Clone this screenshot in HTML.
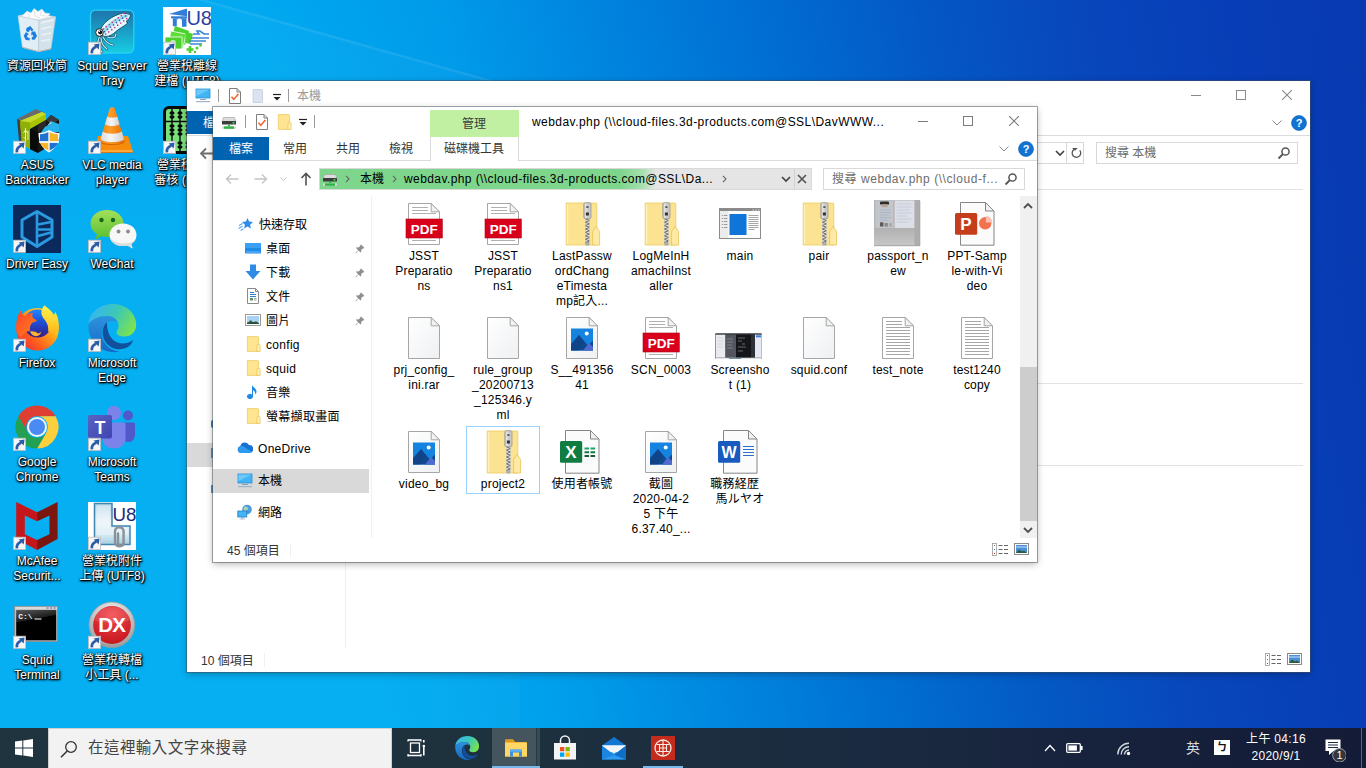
<!DOCTYPE html><html lang="zh-Hant"><head><meta charset="utf-8"><title>Desktop</title><style>
*{box-sizing:border-box;margin:0;padding:0}
html,body{width:1366px;height:768px;overflow:hidden}
body{position:relative;font-family:"Liberation Sans","Noto Sans CJK TC",sans-serif;font-size:12px;color:#000;
background:linear-gradient(180deg,rgba(0,70,210,.05) 0,rgba(0,70,210,0) 300px),linear-gradient(80deg,#00aef2 0px,#00aef2 386px,#009feb 564px,#0087df 721px,#0070d3 879px,#0459c5 1036px,#0846bb 1194px,#073db5 1357px,#0839b0 1479px);}
.abs{position:absolute}
.ray{position:absolute;left:0;top:0;width:1366px;height:768px}
/* desktop icons */
.di{position:absolute;width:90px;text-align:center;color:#fff;font-size:12px;line-height:15px;
 text-shadow:1px 1px 1px #000,0 0 2px #000,1px 1px 3px rgba(0,0,0,.9),0 1px 2px rgba(0,0,0,.9)}
.di svg{display:block;margin:0 auto 4px auto;width:48px;height:48px;overflow:visible;text-shadow:none}
.ls{letter-spacing:.3px}
.di .ls{letter-spacing:0}
.ttl{letter-spacing:.45px}
.adr{letter-spacing:.41px}
.srch{letter-spacing:.55px}
.fi .lb{letter-spacing:.2px}
/* windows */
.win{position:absolute;background:#fff;box-shadow:0 0 0 1px rgba(70,80,90,.5),0 2px 7px rgba(0,0,0,.3)}
.t12{font-size:12px;line-height:16px;white-space:nowrap}
.gray{color:#6d6d6d}
.nav{position:absolute;font-size:12px;line-height:16px;white-space:nowrap;color:#000}
.fi{position:absolute;width:76px;text-align:center;font-size:12px;line-height:15px;color:#000;word-break:break-all}
.fi svg{display:block;margin:0 auto;width:48px;height:48px;overflow:visible}
.fi .lb{margin-top:1px}
/* taskbar */
#tb{position:absolute;left:0;top:728px;width:1366px;height:40px;
 background:linear-gradient(90deg,#1f343e 0px,#1e323d 400px,#1c2e3f 700px,#1a2940 900px,#17223c 1100px,#141b37 1366px)}
</style></head><body>
<svg width="0" height="0" style="position:absolute"><linearGradient id="bk" x1="0" y1="0" x2="1" y2="1"><stop offset="0" stop-color="#ffffff"/><stop offset="1" stop-color="#eef0f2"/></linearGradient><linearGradient id="pp" x1="0" y1="0" x2="0" y2="1"><stop offset="0" stop-color="#b1b1b1"/><stop offset="1" stop-color="#c7c7c7"/></linearGradient></svg>
<svg class="ray" viewBox="0 0 1366 768"><polygon points="0,-58 520,88 520,768 0,768" fill="#fff" opacity=".025"/><polygon points="0,-58 520,88 520,90.500 0,-55" fill="#fff" opacity=".08"/></svg>
<div class="di" style="left:-8px;top:7px"><svg viewBox="0 0 48 48"><path d="M5 9l15-3.500 22.700 4.400L26 13.500z" fill="#eef0f3" stroke="#cfd4da" stroke-width=".6"/><path d="M9 9l5-5 4 2 3-4.500 4 3 4-2.500 3 4 5 .5-3 4-8 2-9-1z" fill="#fbfbfc" stroke="#d4d9df" stroke-width=".5"/><path d="M14 5l3 4-4 3M21 3l1 6 5 2M29 3l-2 5 6 1" fill="none" stroke="#cfd5dc" stroke-width=".6"/><path d="M5 9l21 4.500-.4 31.100L9.400 40.300z" fill="#f3f4f6" opacity=".93" stroke="#c9ced5" stroke-width=".6"/><path d="M26 13.500l16.700-3.600L38 41.800l-12.400 2.800z" fill="#e4e7eb" opacity=".93" stroke="#c4c9d0" stroke-width=".6"/><path d="M28 16l12-3M28 22l11-2.500M28 28l10-2M28 34l9-1.500" stroke="#f2f5f8" stroke-width="1.600" opacity=".8"/><path d="M9.400 40.300l16.200 4.300L38 41.800" fill="none" stroke="#c9b8b0" stroke-width="1"/><g fill="#1b7fe0"><path d="M13.500 21l3.800-2 3.300 4-2 1.300-1.300-1.800-1.700 2.700-2.600-1.200z"/><path d="M22 24.500l2 4.500-2.300 3.800-3-.4.200-2.600 1.700.2-1.200-2.500-1.300.9.500-3.800z"/><path d="M16.500 33.500l-4-.8-1.800-4 2.300-3.700 3 2.200-1.200.6-.8 1.400.9 1.500 1.900.4z"/></g></svg>資源回收筒</div>
<div class="di" style="left:67px;top:7px"><svg viewBox="0 0 48 48"><linearGradient id="sq" x1="0" y1="0" x2="0" y2="1"><stop offset="0" stop-color="#1d74ac"/><stop offset=".5" stop-color="#1a9fc6"/><stop offset="1" stop-color="#17cde4"/></linearGradient><rect x="2.500" y="3.200" width="43.300" height="42.800" rx="5" fill="url(#sq)" stroke="#27d2f2" stroke-width="1.300"/><path d="M11 37c0 3 1 6 3 8M13 31c0 4 2 8 6 11M15 30c2 4 5 7 10 8M16 28c3 2 7 4 11 2l1-3M11.500 30c-2 3-2 7-1 11" fill="none" stroke="#0d4f66" stroke-width="2.400" stroke-linecap="round"/><path d="M11 37c0 3 1 6 3 8M13 31c0 4 2 8 6 11M15 30c2 4 5 7 10 8M16 28c3 2 7 4 11 2l1-3M11.500 30c-2 3-2 7-1 11" fill="none" stroke="#bfeaf5" stroke-width="1.300" stroke-linecap="round"/><path d="M12 24C14 16 24 8.500 35 6l7.500 1.500c0 2.500-1.500 5-4.500 7l2 1.500c-5 4-8 5-12 8.500-3 3-7 5-10 5-3 0-6-2-6-5.500z" fill="#e3f8fc" stroke="#0d4f66" stroke-width=".9"/><path d="M15 26C19 19 28 12 39 8.500" fill="none" stroke="#86dcea" stroke-width="3.400" opacity=".85" stroke-linecap="round"/><circle cx="15.3" cy="21.9" r=".85" fill="#d23a8e"/><circle cx="16.5" cy="24.5" r=".85" fill="#3f55c8"/><circle cx="17.7" cy="27.1" r=".85" fill="#d23a8e"/><circle cx="18.3" cy="19.7" r=".85" fill="#d23a8e"/><circle cx="19.5" cy="22.3" r=".85" fill="#3f55c8"/><circle cx="20.7" cy="24.9" r=".85" fill="#d23a8e"/><circle cx="21.3" cy="17.5" r=".85" fill="#d23a8e"/><circle cx="22.5" cy="20.1" r=".85" fill="#3f55c8"/><circle cx="23.7" cy="22.7" r=".85" fill="#d23a8e"/><circle cx="24.3" cy="15.3" r=".85" fill="#d23a8e"/><circle cx="25.5" cy="17.9" r=".85" fill="#3f55c8"/><circle cx="26.7" cy="20.5" r=".85" fill="#d23a8e"/><circle cx="27.3" cy="13.0" r=".85" fill="#d23a8e"/><circle cx="28.5" cy="15.6" r=".85" fill="#3f55c8"/><circle cx="29.7" cy="18.2" r=".85" fill="#d23a8e"/><circle cx="30.3" cy="10.8" r=".85" fill="#d23a8e"/><circle cx="31.5" cy="13.4" r=".85" fill="#3f55c8"/><circle cx="32.7" cy="16.0" r=".85" fill="#d23a8e"/><circle cx="33.3" cy="8.6" r=".85" fill="#d23a8e"/><circle cx="34.5" cy="11.2" r=".85" fill="#3f55c8"/><circle cx="35.7" cy="13.8" r=".85" fill="#d23a8e"/><circle cx="36.3" cy="6.4" r=".85" fill="#d23a8e"/><circle cx="37.5" cy="9.0" r=".85" fill="#3f55c8"/><circle cx="38.7" cy="11.6" r=".85" fill="#d23a8e"/><circle cx="11.500" cy="25.500" r="3.800" fill="#fff" stroke="#111" stroke-width=".9"/><circle cx="12.200" cy="25.300" r="2.100" fill="#111"/><circle cx="11.300" cy="24.500" r=".7" fill="#fff"/><rect x=".4" y="35.200" width="12.200" height="12.200" fill="#f6f6f6" stroke="#bdbdbd" stroke-width=".8"/><path d="M3.900 46.400c-.4-3.400 1.200-5.600 4.400-6.600" stroke="#2b5ca8" stroke-width="2.700" fill="none"/><path d="M5.600 37.400l5.900-.8-.8 5.900z" fill="#2b5ca8"/></svg><span class="ls">Squid Server<br>Tray</span></div>
<div class="di" style="left:142px;top:7px"><svg viewBox="0 0 48 48"><rect x="0" y="0" width="48" height="48" fill="#fff"/><path d="M6 7l18-5.500v7.800z" fill="#2f7fd6"/><rect x="8" y="9.300" width="16" height="2" fill="#2f7fd6"/><path d="M9.800 11.300h4v8h-4zM19 11.300h4.500v8.500h-4.500z" fill="#2f7fd6"/><path d="M13.800 14a2.600 2.600 0 0 1 5.200 0v-2.700h-5.200z" fill="#2f7fd6"/><text x="36.200" y="17.700" font-family="Liberation Sans,sans-serif" font-size="20" fill="#2a3fa0" text-anchor="middle">U8</text><g fill="#4cd12e"><path d="M12 19l14 5-4 14-14-5z"/><path d="M8 24l15 3-3 14-15-3z" fill="#5fdc3a" stroke="#fff" stroke-width=".8"/><path d="M2 30h17v12h-17z" stroke="#fff" stroke-width=".8"/><path d="M22 24l8 3-3 10-4-1z"/></g><circle cx="10" cy="36" r="3" fill="#fff" opacity=".7"/><path d="M30 27h6l-2-3h3l4 3h5M28 31h18M26 34h17M27 37h12" stroke="#3a86d8" stroke-width="1.600" fill="none"/><path d="M27 39v7M23.500 42.500h7" stroke="#4cd12e" stroke-width="2.600"/><circle cx="34" cy="41" r="1.500" fill="#4cd12e"/><circle cx="37.500" cy="38.500" r="1.300" fill="#4cd12e"/><circle cx="32" cy="45" r="1.200" fill="#4cd12e"/><rect x=".4" y="35.200" width="12.200" height="12.200" fill="#f6f6f6" stroke="#bdbdbd" stroke-width=".8"/><path d="M3.900 46.400c-.4-3.400 1.200-5.600 4.400-6.600" stroke="#2b5ca8" stroke-width="2.700" fill="none"/><path d="M5.600 37.400l5.900-.8-.8 5.900z" fill="#2b5ca8"/></svg>營業稅離線<br>建檔 (UTF8)</div>
<div class="di" style="left:-8px;top:106px"><svg viewBox="0 0 48 48"><path d="M4 13l19-10 9 4-18 11z" fill="#6a6a6a"/><path d="M4 13l10 5v22l-8-5z" fill="#3e3e3e"/><path d="M7 15l22-9 4 2v7l-16 8v20l-8-5z" fill="#a6c400"/><path d="M7 15l22-9 4 2-16 8.500z" fill="#c6da2e"/><path d="M7 15l10 1.500V43l-8-5z" fill="#8fae08"/><path d="M12.500 22v14M10.500 27l2-3 2 3M15 25v9M10.500 31l2 2" stroke="#e4f2a8" stroke-width="1" fill="none"/><path d="M17 23l16-9 5-5 8 5v20L25 47l-8-4z" fill="#161616"/><path d="M33 14l5-5 8 5-7 4.500z" fill="#3a3a3a"/><path d="M17 23l8 3v21l-8-4z" fill="#0a0a0a"/><path d="M25 26l8-5v-7l-8 4.500z" fill="#2a2a2a"/><path d="M28 27c2-5 6-8 11-9l-1-3 8 3v8c-7 0-12 2-18 6z" fill="#26b2ea"/><path d="M28 27c2-5 6-8 11-9l-1-3-5 6c-2 1-4 3-5 6z" fill="#7fd6f5"/><path d="M36 24c3 2 6.500 3 10.500 3 0 9-3 15-10.500 19.500C28.500 42 25.500 36 25.500 27c4 0 7.500-1 10.500-3z" fill="#fff"/><path d="M36 25.700c2.700 1.600 5.500 2.400 9 2.600v7.200h-9z" fill="#f7b52a"/><path d="M36 25.700c-2.700 1.600-5.500 2.400-9 2.600v7.200h9z" fill="#1f72d0"/><path d="M27 36.500h9V45c-5-2.500-8-5-9-8.500z" fill="#f7b52a"/><path d="M45 36.500h-9V45c5-2.500 8-5 9-8.500z" fill="#1f72d0"/><path d="M36 25v20.500M26 36h20" stroke="#fff" stroke-width="1.300"/><rect x=".4" y="35.200" width="12.200" height="12.200" fill="#f6f6f6" stroke="#bdbdbd" stroke-width=".8"/><path d="M3.900 46.400c-.4-3.400 1.200-5.600 4.400-6.600" stroke="#2b5ca8" stroke-width="2.700" fill="none"/><path d="M5.600 37.400l5.900-.8-.8 5.900z" fill="#2b5ca8"/></svg><span class="ls">ASUS<br>Backtracker</span></div>
<div class="di" style="left:67px;top:106px"><svg viewBox="0 0 48 48"><linearGradient id="vl" x1="0" y1="0" x2="1" y2="0"><stop offset="0" stop-color="#ee7f08"/><stop offset=".4" stop-color="#ff9d2a"/><stop offset="1" stop-color="#e36c00"/></linearGradient><linearGradient id="vw" x1="0" y1="0" x2="1" y2="0"><stop offset="0" stop-color="#d9d9d9"/><stop offset=".45" stop-color="#f6f6f6"/><stop offset="1" stop-color="#cfcfcf"/></linearGradient><path d="M10 30h30l4.500 14v2.500h-37.500v-2.500z" fill="#f68b0c"/><path d="M7 44h37.500v2.500h-37.500z" fill="#ffa93a"/><path d="M7 46h37.500v.8h-37.500z" fill="#d96a00"/><path d="M21.500 3c.5-2.200 5-2.200 5.500 0l9.500 32c0 4-24.500 4-24.500 0z" fill="url(#vl)"/><path d="M19.300 10.500c2 1.600 7.900 1.600 9.900 0l2.300 7.700c-3 2.400-11.500 2.400-14.500 0z" fill="url(#vw)"/><path d="M14.800 25.600c4 3 15 3 19 0l2.300 7.800c-4 3.400-19.600 3.400-23.600 0z" fill="url(#vw)"/><path d="M12 35.500c0 4 24.500 4 24.500 0" fill="none" stroke="#d46200" stroke-width="1"/><rect x=".4" y="35.200" width="12.200" height="12.200" fill="#f6f6f6" stroke="#bdbdbd" stroke-width=".8"/><path d="M3.900 46.400c-.4-3.400 1.200-5.600 4.400-6.600" stroke="#2b5ca8" stroke-width="2.700" fill="none"/><path d="M5.600 37.400l5.900-.8-.8 5.900z" fill="#2b5ca8"/></svg><span class="ls">VLC media<br>player</span></div>
<div class="di" style="left:142px;top:106px"><svg viewBox="0 0 48 48"><rect x="0" y="0" width="48" height="48" rx="6" fill="#0a0a0a"/><rect x="3" y="3" width="42" height="42" rx="3" fill="#79e07a"/><path d="M3 15.500h42" stroke="#0a0a0a" stroke-width="1.600"/><path d="M9 3v42" stroke="#0a0a0a" stroke-width="1.400"/><ellipse cx="9" cy="7" rx="2.600" ry="1.700" fill="#0a0a0a"/><ellipse cx="9" cy="11" rx="2.600" ry="1.700" fill="#0a0a0a"/><ellipse cx="9" cy="20" rx="2.600" ry="1.700" fill="#0a0a0a"/><ellipse cx="9" cy="24" rx="2.600" ry="1.700" fill="#0a0a0a"/><ellipse cx="9" cy="28" rx="2.600" ry="1.700" fill="#0a0a0a"/><ellipse cx="9" cy="37" rx="2.600" ry="1.700" fill="#0a0a0a"/><ellipse cx="9" cy="41" rx="2.600" ry="1.700" fill="#0a0a0a"/><path d="M17 3v42" stroke="#0a0a0a" stroke-width="1.400"/><ellipse cx="17" cy="7" rx="2.600" ry="1.700" fill="#0a0a0a"/><ellipse cx="17" cy="11" rx="2.600" ry="1.700" fill="#0a0a0a"/><ellipse cx="17" cy="20" rx="2.600" ry="1.700" fill="#0a0a0a"/><ellipse cx="17" cy="24" rx="2.600" ry="1.700" fill="#0a0a0a"/><ellipse cx="17" cy="28" rx="2.600" ry="1.700" fill="#0a0a0a"/><ellipse cx="17" cy="37" rx="2.600" ry="1.700" fill="#0a0a0a"/><ellipse cx="17" cy="41" rx="2.600" ry="1.700" fill="#0a0a0a"/><path d="M25 3v42" stroke="#0a0a0a" stroke-width="1.400"/><ellipse cx="25" cy="7" rx="2.600" ry="1.700" fill="#0a0a0a"/><ellipse cx="25" cy="11" rx="2.600" ry="1.700" fill="#0a0a0a"/><ellipse cx="25" cy="20" rx="2.600" ry="1.700" fill="#0a0a0a"/><ellipse cx="25" cy="24" rx="2.600" ry="1.700" fill="#0a0a0a"/><ellipse cx="25" cy="28" rx="2.600" ry="1.700" fill="#0a0a0a"/><ellipse cx="25" cy="37" rx="2.600" ry="1.700" fill="#0a0a0a"/><ellipse cx="25" cy="41" rx="2.600" ry="1.700" fill="#0a0a0a"/><path d="M33 3v42" stroke="#0a0a0a" stroke-width="1.400"/><ellipse cx="33" cy="7" rx="2.600" ry="1.700" fill="#0a0a0a"/><ellipse cx="33" cy="11" rx="2.600" ry="1.700" fill="#0a0a0a"/><ellipse cx="33" cy="20" rx="2.600" ry="1.700" fill="#0a0a0a"/><ellipse cx="33" cy="24" rx="2.600" ry="1.700" fill="#0a0a0a"/><ellipse cx="33" cy="28" rx="2.600" ry="1.700" fill="#0a0a0a"/><ellipse cx="33" cy="37" rx="2.600" ry="1.700" fill="#0a0a0a"/><ellipse cx="33" cy="41" rx="2.600" ry="1.700" fill="#0a0a0a"/><path d="M41 3v42" stroke="#0a0a0a" stroke-width="1.400"/><ellipse cx="41" cy="7" rx="2.600" ry="1.700" fill="#0a0a0a"/><ellipse cx="41" cy="11" rx="2.600" ry="1.700" fill="#0a0a0a"/><ellipse cx="41" cy="20" rx="2.600" ry="1.700" fill="#0a0a0a"/><ellipse cx="41" cy="24" rx="2.600" ry="1.700" fill="#0a0a0a"/><ellipse cx="41" cy="28" rx="2.600" ry="1.700" fill="#0a0a0a"/><ellipse cx="41" cy="37" rx="2.600" ry="1.700" fill="#0a0a0a"/><ellipse cx="41" cy="41" rx="2.600" ry="1.700" fill="#0a0a0a"/><rect x=".4" y="35.200" width="12.200" height="12.200" fill="#f6f6f6" stroke="#bdbdbd" stroke-width=".8"/><path d="M3.900 46.400c-.4-3.400 1.200-5.600 4.400-6.600" stroke="#2b5ca8" stroke-width="2.700" fill="none"/><path d="M5.600 37.400l5.900-.8-.8 5.900z" fill="#2b5ca8"/></svg>營業稅申報<br>審核 (UTF8)</div>
<div class="di" style="left:-8px;top:205px"><svg viewBox="0 0 48 48"><rect x="0" y="0" width="48" height="48" fill="#0a2a5e"/><path d="M24 6.500l15 8.500v17l-15 9.500-15-9.500v-17z" fill="none" stroke="#2a9be0" stroke-width="3" stroke-linejoin="round"/><path d="M24 6.500v35" stroke="#2a9be0" stroke-width="2.600"/><path d="M25 19.500l13-2.500M25 24.500h13.500M25 31l13-3.500" stroke="#2a9be0" stroke-width="2.400"/><rect x=".4" y="35.200" width="12.200" height="12.200" fill="#f6f6f6" stroke="#bdbdbd" stroke-width=".8"/><path d="M3.900 46.400c-.4-3.400 1.200-5.600 4.400-6.600" stroke="#2b5ca8" stroke-width="2.700" fill="none"/><path d="M5.600 37.400l5.900-.8-.8 5.900z" fill="#2b5ca8"/></svg><span class="ls">Driver Easy</span></div>
<div class="di" style="left:67px;top:205px"><svg viewBox="0 0 48 48"><linearGradient id="wc" x1="0" y1="0" x2="0" y2="1"><stop offset="0" stop-color="#a4e05a"/><stop offset="1" stop-color="#57bd2f"/></linearGradient><path d="M19 5c9.500 0 16.500 6 16.500 13.500s-7 13.500-16.500 13.500c-2 0-3.800-.3-5.500-.8l-6.500 3.800 2-5.800c-4-2.500-6.500-6.300-6.500-10.700 0-7.500 7-13.500 16.500-13.500z" fill="url(#wc)"/><circle cx="13.500" cy="15" r="2.200" fill="#176a1a"/><circle cx="25" cy="15" r="2.200" fill="#176a1a"/><path d="M35 18.500c8 0 13.500 5 13.500 11.500 0 3.800-2 7-5.300 9l1.500 4.500-5.300-3c-1.400.4-2.900.6-4.400.6-8 0-13.500-5-13.500-11.100s5.500-11.500 13.500-11.500z" fill="#f7f7f7"/><path d="M22 33c1.500 4.700 6.500 8.100 13 8.100 1.500 0 3-.2 4.400-.6l5.300 3-1.500-4.500c2-1.200 3.600-2.900 4.500-4.800-4 5-18 7-25.700-1.200z" fill="#dcdcdc"/><circle cx="30.500" cy="26.500" r="1.900" fill="#8c8c8c"/><circle cx="40" cy="26.500" r="1.900" fill="#8c8c8c"/><rect x=".4" y="35.200" width="12.200" height="12.200" fill="#f6f6f6" stroke="#bdbdbd" stroke-width=".8"/><path d="M3.900 46.400c-.4-3.400 1.200-5.600 4.400-6.600" stroke="#2b5ca8" stroke-width="2.700" fill="none"/><path d="M5.600 37.400l5.900-.8-.8 5.900z" fill="#2b5ca8"/></svg><span class="ls">WeChat</span></div>
<div class="di" style="left:-8px;top:304px"><svg viewBox="0 0 48 48"><linearGradient id="ff" x1="1" y1="0" x2="0" y2="1"><stop offset="0" stop-color="#fff04a"/><stop offset=".35" stop-color="#ffb41a"/><stop offset=".68" stop-color="#ff5a1e"/><stop offset="1" stop-color="#e61e4a"/></linearGradient><linearGradient id="fg" x1="0" y1="0" x2="0" y2="1"><stop offset="0" stop-color="#1f86ff"/><stop offset=".45" stop-color="#1c4fd8"/><stop offset="1" stop-color="#3a1a86"/></linearGradient><linearGradient id="fy" x1="0" y1="0" x2="0" y2="1"><stop offset="0" stop-color="#fff24f"/><stop offset="1" stop-color="#ffbc1a"/></linearGradient><linearGradient id="fh" x1="0" y1="0" x2="1" y2="1"><stop offset="0" stop-color="#ff3f2a"/><stop offset="1" stop-color="#ff8a1a"/></linearGradient><circle cx="24.500" cy="25.300" r="21.300" fill="url(#ff)"/><circle cx="24.500" cy="19.500" r="14" fill="url(#fg)"/><path d="M3.300 24C2.800 15 5.500 10 8 6c.5 3 2 5 4 6 2-2 5-3 8-3-1 2-1 3.500 0 5l4 2.500c-2 1.500-4 2-5 2.500-2 2-2.500 5-2 8-4 0-8 3-9 7-3-3-4.500-6-4.700-10z" fill="url(#fh)"/><path d="M31.300 1.200C35 4 39 7 41 11c1-1.500 1-2.500 1-3.500 3 4.500 4.300 10.500 3.800 17.500L35 27.500c1-5-1-9-4-12.500-2-2.500-3-5.500-2.500-8 .5-2 1.500-4 2.800-5.800z" fill="url(#fy)"/><path d="M17 27.500c3-.5 6 .5 8 2 1.500-.5 2.500-1 3.400-2.100-.4 2.600-2.400 4.600-5.400 4.800-3 0-5-2.200-6-4.700z" fill="#ffb52a"/><rect x=".4" y="35.200" width="12.200" height="12.200" fill="#f6f6f6" stroke="#bdbdbd" stroke-width=".8"/><path d="M3.900 46.400c-.4-3.400 1.200-5.600 4.400-6.600" stroke="#2b5ca8" stroke-width="2.700" fill="none"/><path d="M5.600 37.400l5.900-.8-.8 5.900z" fill="#2b5ca8"/></svg><span class="ls">Firefox</span></div>
<div class="di" style="left:67px;top:304px"><svg viewBox="0 0 48 48"><linearGradient id="e1" x1="0" y1=".3" x2="1" y2=".7"><stop offset="0" stop-color="#36b4f2"/><stop offset=".5" stop-color="#3cc9b4"/><stop offset="1" stop-color="#80e44a"/></linearGradient><linearGradient id="e2" x1="0" y1="0" x2="0" y2="1"><stop offset="0" stop-color="#2d92de"/><stop offset="1" stop-color="#1668c2"/></linearGradient><path d="M.5 20C1.500 8 12 0 25 0c14 0 23.200 10 23.200 20.500 0 7.500-5.200 12-11.700 12-4.500 0-8-1.500-8-4 0-2 2-3 2-7 0-5-4.500-9.500-11.500-9.500C11 12 4 15.500.5 20z" fill="url(#e1)"/><path d="M.5 20C4 15.500 11 12 19 12c5.500 0 9.500 3 10.800 7-2.800-2.500-7.300-2.500-10.800-.5-6 3.500-7 13.500-2 21 4 5.500 10 8 15 8-4 1-10 1-15-1C6.500 42.500-.5 32 .5 20z" fill="url(#e2)"/><path d="M19 18.500c-5 3.500-6 12.500-1.500 19.500 5 7.500 15.500 9.500 23 4.500 2.500-1.700 4-4 4.500-6.500-3 2.500-6.500 3.500-10.500 3.500-9 0-16-8.500-15.500-21z" fill="#124f9c"/><rect x=".4" y="35.200" width="12.200" height="12.200" fill="#f6f6f6" stroke="#bdbdbd" stroke-width=".8"/><path d="M3.900 46.400c-.4-3.400 1.200-5.600 4.400-6.600" stroke="#2b5ca8" stroke-width="2.700" fill="none"/><path d="M5.600 37.400l5.900-.8-.8 5.900z" fill="#2b5ca8"/></svg><span class="ls">Microsoft<br>Edge</span></div>
<div class="di" style="left:-8px;top:403px"><svg viewBox="0 0 48 48"><path d="M5.380 13.250A21.500 21.500 0 0 1 42.620 13.250L24 13.250A10.750 10.750 0 0 0 14.690 29.375z" fill="#de3f32"/><path d="M42.620 13.250A21.500 21.500 0 0 1 24 45.500L33.310 29.375A10.750 10.750 0 0 0 24 13.250z" fill="#fdcf3c"/><path d="M24 45.500A21.500 21.500 0 0 1 5.380 13.250L14.690 29.375A10.750 10.750 0 0 0 33.310 29.375z" fill="#22a152"/><circle cx="24" cy="24" r="10" fill="#f4f4f4"/><circle cx="24" cy="24" r="8" fill="#4a8af4"/><rect x=".4" y="35.200" width="12.200" height="12.200" fill="#f6f6f6" stroke="#bdbdbd" stroke-width=".8"/><path d="M3.900 46.400c-.4-3.400 1.200-5.600 4.400-6.600" stroke="#2b5ca8" stroke-width="2.700" fill="none"/><path d="M5.600 37.400l5.900-.8-.8 5.900z" fill="#2b5ca8"/></svg><span class="ls">Google<br>Chrome</span></div>
<div class="di" style="left:67px;top:403px"><svg viewBox="0 0 48 48"><linearGradient id="tm" x1="0" y1="0" x2="1" y2="1"><stop offset="0" stop-color="#5a62c3"/><stop offset="1" stop-color="#3f46b0"/></linearGradient><circle cx="26" cy="10" r="7.200" fill="#7b83eb"/><circle cx="40" cy="12.500" r="5" fill="#5059c9"/><path d="M34 19.500h11.500a1.500 1.500 0 0 1 1.500 1.500v10.500c0 5-3.500 7.500-6.500 7.500s-6-2-6.500-5z" fill="#5059c9"/><path d="M14.500 19.500h21.500a1.500 1.500 0 0 1 1.500 1.500v14c0 6.500-5 10.500-11.500 10.500s-11.500-4-11.500-10.500z" fill="#7b83eb"/><rect x="0" y="12" width="24" height="23.500" rx="2" fill="url(#tm)"/><text x="12" y="30.500" font-family="Liberation Sans,sans-serif" font-weight="bold" font-size="18" fill="#fff" text-anchor="middle">T</text><rect x=".4" y="35.200" width="12.200" height="12.200" fill="#f6f6f6" stroke="#bdbdbd" stroke-width=".8"/><path d="M3.900 46.400c-.4-3.400 1.200-5.600 4.400-6.600" stroke="#2b5ca8" stroke-width="2.700" fill="none"/><path d="M5.600 37.400l5.900-.8-.8 5.900z" fill="#2b5ca8"/></svg><span class="ls">Microsoft<br>Teams</span></div>
<div class="di" style="left:-8px;top:502px"><svg viewBox="0 0 48 48"><path d="M3.200 0L24.100 10.300V19.300L11.800 13.600V32.200L24.100 37.900V47.900L3.200 37z" fill="#c5161c"/><path d="M44.600 0L24.100 10.300V19.300L36.500 13.600V32.200L24.100 37.900V47.900L44.600 37z" fill="#7b170f"/><rect x=".4" y="35.200" width="12.200" height="12.200" fill="#f6f6f6" stroke="#bdbdbd" stroke-width=".8"/><path d="M3.900 46.400c-.4-3.400 1.200-5.600 4.400-6.600" stroke="#2b5ca8" stroke-width="2.700" fill="none"/><path d="M5.600 37.400l5.900-.8-.8 5.900z" fill="#2b5ca8"/></svg><span class="ls">McAfee<br>Securit...</span></div>
<div class="di" style="left:67px;top:502px"><svg viewBox="0 0 48 48"><rect x="0" y="0" width="48" height="48" fill="#fff"/><linearGradient id="ub" x1="0" y1="0" x2="0" y2="1"><stop offset="0" stop-color="#b4d6e6"/><stop offset=".45" stop-color="#e6f2f8"/><stop offset=".8" stop-color="#cfe6f1"/><stop offset="1" stop-color="#a6cfe3"/></linearGradient><path d="M6.500 1.500h17.500v22.500h18v18.500h-35.500z" fill="url(#ub)" stroke="#3f86b0" stroke-width="1.500"/><path d="M8.500 3.500h13.500v22.500h18v7h-31.500z" fill="#fff" opacity=".35"/><text x="36.400" y="18.900" font-family="Liberation Sans,sans-serif" font-size="18.700" fill="#1c2b7a" text-anchor="middle">U8</text><path d="M27 40V29.500a4.300 4.300 0 0 1 8.600 0V41a2.800 2.800 0 0 1-5.600 0V31.500" fill="none" stroke="#8b9199" stroke-width="2.400" stroke-linecap="round"/><path d="M27 40a4.300 4.300 0 0 0 8.600 0" fill="none" stroke="#8b9199" stroke-width="2.400"/><rect x=".4" y="35.200" width="12.200" height="12.200" fill="#f6f6f6" stroke="#bdbdbd" stroke-width=".8"/><path d="M3.900 46.400c-.4-3.400 1.200-5.600 4.400-6.600" stroke="#2b5ca8" stroke-width="2.700" fill="none"/><path d="M5.600 37.400l5.900-.8-.8 5.900z" fill="#2b5ca8"/></svg>營業稅附件<br>上傳 (UTF8)</div>
<div class="di" style="left:-8px;top:601px"><svg viewBox="0 0 48 48"><rect x="1.600" y="5.300" width="43" height="35.300" fill="#bdbdbd" stroke="#8c8c8c" stroke-width=".8"/><rect x="2.200" y="5.900" width="41.800" height="2.800" fill="#d9d9d9"/><path d="M33.500 7h2M37 7h2M40.500 7h2" stroke="#5a5aa0" stroke-width="1"/><linearGradient id="cm" x1="0" y1="0" x2=".25" y2="1"><stop offset="0" stop-color="#5a5a5a"/><stop offset=".38" stop-color="#1c1c1c"/><stop offset=".4" stop-color="#000"/></linearGradient><rect x="3.200" y="8.900" width="40" height="30.400" fill="url(#cm)"/><text x="5.200" y="17.800" font-family="Liberation Mono,monospace" font-weight="bold" font-size="8" fill="#f4f4f4">C:\</text><path d="M21.500 18h7" stroke="#f4f4f4" stroke-width="1.100"/><rect x=".4" y="35.200" width="12.200" height="12.200" fill="#f6f6f6" stroke="#bdbdbd" stroke-width=".8"/><path d="M3.900 46.400c-.4-3.400 1.200-5.600 4.400-6.600" stroke="#2b5ca8" stroke-width="2.700" fill="none"/><path d="M5.600 37.400l5.900-.8-.8 5.900z" fill="#2b5ca8"/></svg><span class="ls">Squid<br>Terminal</span></div>
<div class="di" style="left:67px;top:601px"><svg viewBox="0 0 48 48"><radialGradient id="dr" cx=".5" cy=".3" r=".7"><stop offset="0" stop-color="#ffffff"/><stop offset="1" stop-color="#9a9a9a"/></radialGradient><circle cx="23.900" cy="23.900" r="22.900" fill="url(#dr)" stroke="#9a9a9a" stroke-width=".6"/><radialGradient id="dd" cx=".5" cy=".25" r=".8"><stop offset="0" stop-color="#f2444a"/><stop offset="1" stop-color="#c4141c"/></radialGradient><circle cx="24" cy="24" r="18.900" fill="url(#dd)"/><path d="M6 19a18.800 18.800 0 0 1 36 0c-8 4-28 4-36 0z" fill="#fff" opacity=".13"/><text x="23.600" y="31.200" font-family="Liberation Sans,sans-serif" font-weight="bold" font-size="20.500" fill="#fff" text-anchor="middle" letter-spacing="-1">DX</text><rect x=".4" y="35.200" width="12.200" height="12.200" fill="#f6f6f6" stroke="#bdbdbd" stroke-width=".8"/><path d="M3.900 46.400c-.4-3.400 1.200-5.600 4.400-6.600" stroke="#2b5ca8" stroke-width="2.700" fill="none"/><path d="M5.600 37.400l5.900-.8-.8 5.900z" fill="#2b5ca8"/></svg>營業稅轉檔<br>小工具 (...</div>
<div class="win" style="left:187px;top:81px;width:1123px;height:591px">
<div class="abs" style="left:-187px;top:-81px;width:0;height:0">
<svg class="abs" style="left:195px;top:87px" width="16" height="16" viewBox="0 0 16 16"><rect x="1" y="2" width="14" height="9" fill="#41b6f5" stroke="#2a8fd2" stroke-width=".8"/><path d="M1.400 2.400h13.200L1.400 9z" fill="#7fd2fb" opacity=".7"/><rect x="5" y="12" width="6" height=".9" fill="#7f9cb8"/><rect x="1" y="14" width="14" height="1.200" fill="#9db4cc"/></svg>
<div class="abs" style="left:218px;top:89px;width:1px;height:13px;background:#9a9a9a"></div>
<svg class="abs" style="left:227px;top:88px" width="16" height="16" viewBox="0 0 16 16"><path d="M2.500 .5h7.500l3.500 3.500v11.500h-11z" fill="#fff" stroke="#7e7e7e"/><path d="M10 .5v3.500h3.500" fill="none" stroke="#7e7e7e"/><path d="M4.500 8.800l2.300 2.600 4.600-5.400" fill="none" stroke="#f0642d" stroke-width="1.600"/></svg>
<svg class="abs" style="left:250px;top:88px" width="16" height="16" viewBox="0 0 16 16"><path d="M3 1.5h8.5a1 1 0 0 1 1 1v12h-9.5z" fill="#dbe3f0" stroke="#c2cde0" stroke-width=".8"/></svg>
<svg class="abs" style="left:272px;top:92px" width="10" height="10" viewBox="0 0 10 10"><path d="M1 2.500h8" stroke="#222" stroke-width="1.200"/><path d="M1.500 5h7L5 8.500z" fill="#222"/></svg>
<div class="abs" style="left:288px;top:89px;width:1px;height:13px;background:#9a9a9a"></div>
<div class="abs t12" style="left:297px;top:87.5px;color:#9a9a9a">本機</div>
<svg class="abs" style="left:1191px;top:90px" width="10" height="10" viewBox="0 0 10 10"><path d="M0 5.500h10" stroke="#8a8a8a" stroke-width="1"/></svg>
<svg class="abs" style="left:1236px;top:90px" width="10" height="10" viewBox="0 0 10 10"><rect x=".5" y=".5" width="9" height="9" fill="none" stroke="#8a8a8a"/></svg>
<svg class="abs" style="left:1282px;top:90px" width="10" height="10" viewBox="0 0 10 10"><path d="M0 0l10 10M10 0L0 10" stroke="#8a8a8a" stroke-width="1.100"/></svg>
<div class="abs" style="left:187px;top:111px;width:56px;height:23px;background:#0063b1"></div>
<div class="abs t12" style="left:203px;top:114.5px;color:#fff">檔案</div>
<svg class="abs" style="left:1272px;top:120px" width="10" height="6" viewBox="0 0 10 6"><path d="M.5 .5L5 5 9.500 .5" fill="none" stroke="#8a8a8a" stroke-width="1"/></svg>
<svg class="abs" style="left:1291px;top:115px" width="16" height="16" viewBox="0 0 16 16"><circle cx="8" cy="8" r="7.500" fill="#1173d4"/><circle cx="8" cy="8" r="7.500" fill="none" stroke="#0b5cb0" stroke-width=".6"/><text x="8" y="12" font-size="11" font-weight="bold" fill="#fff" text-anchor="middle" font-family="Liberation Sans,sans-serif">?</text></svg>
<div class="abs" style="left:187px;top:135px;width:1123px;height:1px;background:#dadbdc"></div>
<svg class="abs" style="left:199px;top:147px" width="16" height="13" viewBox="0 0 16 13"><path d="M15 6.500H2M7 1.500L2 6.500 7 11.500" fill="none" stroke="#6f6f6f" stroke-width="1.800"/></svg>
<div class="abs" style="left:1000px;top:142px;width:84px;height:22px;border:1px solid #d9d9d9;border-left:none;background:#fff"></div>
<svg class="abs" style="left:1055px;top:150px" width="10" height="7" viewBox="0 0 10 7"><path d="M1 1l4 4 4-4" fill="none" stroke="#444" stroke-width="1.700"/></svg>
<div class="abs" style="left:1066px;top:143px;width:1px;height:20px;background:#d9d9d9"></div>
<svg class="abs" style="left:1070px;top:147px" width="12" height="12" viewBox="0 0 12 12"><path d="M9.800 3.300A4.300 4.300 0 1 1 6 1.700" fill="none" stroke="#555" stroke-width="1.300"/><path d="M6.500 0v4h-4z" fill="#555" transform="rotate(45 6 2)"/></svg>
<div class="abs" style="left:1096px;top:142px;width:202px;height:22px;border:1px solid #d9d9d9;background:#fff"></div>
<div class="abs t12" style="left:1105px;top:145px;color:#6d6d6d">搜尋 本機</div>
<svg class="abs" style="left:1276px;top:145px" width="16" height="16" viewBox="0 0 16 16"><circle cx="9.500" cy="6.500" r="3.600" fill="none" stroke="#555" stroke-width="1.500"/><path d="M7 9l-4.500 4.500" stroke="#555" stroke-width="1.800"/></svg>
<div class="abs" style="left:360px;top:189px;width:943px;height:1px;background:#e2e2e2"></div>
<div class="abs" style="left:360px;top:383px;width:943px;height:1px;background:#e2e2e2"></div>
<div class="abs" style="left:360px;top:465px;width:943px;height:1px;background:#e2e2e2"></div>
<div class="abs" style="left:187px;top:443px;width:157px;height:24px;background:#d9d9d9"></div>
<div class="abs" style="left:345px;top:170px;width:1px;height:478px;background:#f0f0f0"></div>
<div class="abs" style="left:211px;top:420px;width:2px;height:8px;background:#1f78d6;border-radius:2px 0 0 2px"></div>
<div class="abs" style="left:211px;top:448px;width:2px;height:10px;background:#4f8fc6"></div>
<div class="abs" style="left:211px;top:485px;width:2px;height:8px;background:#4f8fc6"></div>
<div class="abs t12" style="left:201px;top:652.5px;color:#333">10 個項目</div>
<div class="abs" style="left:264px;top:653px;width:1px;height:14px;background:#f0f0f0"></div>
<svg class="abs" style="left:1265px;top:653px" width="16" height="13" viewBox="0 0 16 13"><rect x=".5" y=".5" width="4" height="12" fill="#fff" stroke="#9a9a9a" stroke-width=".8"/><rect x="2" y="2" width="1" height="1" fill="#666"/><rect x="2" y="6" width="1" height="1" fill="#2f7fd6"/><rect x="2" y="10" width="1" height="1" fill="#d22"/><path d="M6.500 2.500h4M12 2.500h4M6.500 6.500h4M12 6.500h4M6.500 10.500h4M12 10.500h4" stroke="#666" stroke-width="1"/></svg><svg class="abs" style="left:1287px;top:653px" width="15" height="12" viewBox="0 0 15 12"><rect x=".5" y=".5" width="14" height="11" fill="#fff" stroke="#8a8a8a"/><rect x="2" y="2" width="11" height="8" fill="#4a90d9"/><path d="M2 10l3-3.500 3 2 2-1 3 2.500z" fill="#2c5a3c"/><path d="M2 4h11" stroke="#9cc8f0" stroke-width="1.500"/></svg>
</div></div>
<div class="win" style="left:213px;top:107px;width:824px;height:455px">
<div class="abs" style="left:-213px;top:-107px;width:0;height:0">
<svg class="abs" style="left:221px;top:114px" width="16" height="16" viewBox="0 0 16 16"><path d="M2.5 3.5h11l1.5 4H1z" fill="#dcdcdc" stroke="#9a9a9a" stroke-width=".6"/><rect x="1" y="7" width="14" height="3.6" rx=".6" fill="#3c3c3c"/><rect x="11.6" y="8" width="1.8" height="1.6" fill="#3fe04a"/><rect x="7" y="10.6" width="2" height="2" fill="#2fb344"/><rect x="1" y="12.4" width="14" height="2.4" fill="#d8d8d8"/><rect x="3" y="12.4" width="10" height="2.4" fill="#2fb344"/></svg>
<div class="abs" style="left:245px;top:115px;width:1px;height:13px;background:#9a9a9a"></div>
<svg class="abs" style="left:254px;top:114px" width="16" height="16" viewBox="0 0 16 16"><path d="M2.500 .5h7.500l3.500 3.500v11.500h-11z" fill="#fff" stroke="#7e7e7e"/><path d="M10 .5v3.500h3.500" fill="none" stroke="#7e7e7e"/><path d="M4.500 8.800l2.300 2.600 4.600-5.400" fill="none" stroke="#f0642d" stroke-width="1.600"/></svg>
<svg class="abs" style="left:276px;top:114px" width="16" height="16" viewBox="0 0 16 16"><path d="M2.400 .6h10.200a1 1 0 0 1 1 1v13.800h-11.200z" fill="#ffe591" stroke="#ecca62" stroke-width=".8"/><path d="M12 9.600a1 1 0 0 1 1-1h1.100a1 1 0 0 1 1 1v5.800h-3.100z" fill="#fff0b8" stroke="#e6c14e" stroke-width=".7"/></svg>
<svg class="abs" style="left:298px;top:117px" width="10" height="10" viewBox="0 0 10 10"><path d="M1 2.500h8" stroke="#222" stroke-width="1.200"/><path d="M1.500 5h7L5 8.500z" fill="#222"/></svg>
<div class="abs" style="left:314px;top:115px;width:1px;height:13px;background:#9a9a9a"></div>
<div class="abs" style="left:430px;top:110px;width:89px;height:27px;background:#c2f0a2"></div>
<div class="abs t12" style="left:462px;top:116px;color:#3c3c3c">管理</div>
<div class="abs t12 ttl" style="left:532px;top:113.5px;color:#000">webdav.php (\\cloud-files.3d-products.com@SSL\DavWWW...</div>
<svg class="abs" style="left:918px;top:116px" width="10" height="10" viewBox="0 0 10 10"><path d="M0 5.500h10" stroke="#7a7a7a" stroke-width="1"/></svg>
<svg class="abs" style="left:963px;top:116px" width="10" height="10" viewBox="0 0 10 10"><rect x=".5" y=".5" width="9" height="9" fill="none" stroke="#7a7a7a"/></svg>
<svg class="abs" style="left:1009px;top:116px" width="10" height="10" viewBox="0 0 10 10"><path d="M0 0l10 10M10 0L0 10" stroke="#7a7a7a" stroke-width="1.100"/></svg>
<div class="abs" style="left:213px;top:137px;width:56px;height:23px;background:#0063b1"></div>
<div class="abs t12" style="left:229px;top:140.5px;color:#fff">檔案</div>
<div class="abs t12" style="left:283px;top:140.5px;color:#333">常用</div>
<div class="abs t12" style="left:336px;top:140.5px;color:#333">共用</div>
<div class="abs t12" style="left:389px;top:140.5px;color:#333">檢視</div>
<div class="abs" style="left:430px;top:137px;width:89px;height:24px;border-left:1px solid #dadbdc;border-right:1px solid #dadbdc;background:#fff"></div>
<div class="abs t12" style="left:444px;top:140.5px;color:#333">磁碟機工具</div>
<svg class="abs" style="left:999px;top:146px" width="10" height="6" viewBox="0 0 10 6"><path d="M.5 .5L5 5 9.500 .5" fill="none" stroke="#8a8a8a" stroke-width="1"/></svg>
<svg class="abs" style="left:1018px;top:141px" width="16" height="16" viewBox="0 0 16 16"><circle cx="8" cy="8" r="7.500" fill="#1173d4"/><circle cx="8" cy="8" r="7.500" fill="none" stroke="#0b5cb0" stroke-width=".6"/><text x="8" y="12" font-size="11" font-weight="bold" fill="#fff" text-anchor="middle" font-family="Liberation Sans,sans-serif">?</text></svg>
<div class="abs" style="left:213px;top:160px;width:824px;height:1px;background:#dadbdc"></div>
<div class="abs" style="left:430px;top:160px;width:89px;height:1px;background:#fff;border-left:1px solid #dadbdc;border-right:1px solid #dadbdc"></div>
<svg class="abs" style="left:225px;top:173px" width="14" height="12" viewBox="0 0 14 12"><path d="M13.500 6H1.500M6 1.500L1.500 6 6 10.500" fill="none" stroke="#c4c4c4" stroke-width="1.300"/></svg>
<svg class="abs" style="left:254px;top:173px" width="14" height="12" viewBox="0 0 14 12"><path d="M.5 6h12M8 1.500L12.500 6 8 10.500" fill="none" stroke="#c4c4c4" stroke-width="1.300"/></svg>
<svg class="abs" style="left:280px;top:177px" width="7" height="5" viewBox="0 0 7 5"><path d="M.5 .5L3.500 3.500 6.500 .5" fill="none" stroke="#c4c4c4" stroke-width="1"/></svg>
<svg class="abs" style="left:300px;top:172px" width="12" height="14" viewBox="0 0 12 14"><path d="M6 13.500V1.500M1.500 6L6 1.500 10.500 6" fill="none" stroke="#505050" stroke-width="1.600"/></svg>
<div class="abs" style="left:319px;top:168px;width:493px;height:22px;border:1px solid #d9d9d9;background:linear-gradient(90deg,#7ed58c 0,#7ed58c 300px,#a5e0ae 322px,#e5e5e5 336px,#e5e5e5 100%)"></div>
<svg class="abs" style="left:322px;top:171px" width="16" height="16" viewBox="0 0 16 16"><path d="M2.5 3.5h11l1.5 4H1z" fill="#dcdcdc" stroke="#9a9a9a" stroke-width=".6"/><rect x="1" y="7" width="14" height="3.6" rx=".6" fill="#3c3c3c"/><rect x="11.6" y="8" width="1.8" height="1.6" fill="#3fe04a"/><rect x="7" y="10.6" width="2" height="2" fill="#2fb344"/><rect x="1" y="12.4" width="14" height="2.4" fill="#d8d8d8"/><rect x="3" y="12.4" width="10" height="2.4" fill="#2fb344"/></svg>
<svg class="abs" style="left:345px;top:175px" width="5" height="8" viewBox="0 0 5 8"><path d="M1 .8L4 4 1 7.200" fill="none" stroke="#666" stroke-width="1.100"/></svg>
<div class="abs t12" style="left:360px;top:171px;">本機</div>
<svg class="abs" style="left:392px;top:175px" width="5" height="8" viewBox="0 0 5 8"><path d="M1 .8L4 4 1 7.200" fill="none" stroke="#666" stroke-width="1.100"/></svg>
<div class="abs t12 adr" style="left:404px;top:171px;">webdav.php (\\cloud-files.3d-products.com@SSL\Da...</div>
<svg class="abs" style="left:722px;top:175px" width="5" height="8" viewBox="0 0 5 8"><path d="M1 .8L4 4 1 7.200" fill="none" stroke="#666" stroke-width="1.100"/></svg>
<svg class="abs" style="left:781px;top:176px" width="10" height="7" viewBox="0 0 10 7"><path d="M1 1l4 4 4-4" fill="none" stroke="#444" stroke-width="1.700"/></svg>
<div class="abs" style="left:794px;top:169px;width:1px;height:20px;background:#d0d0d0"></div>
<svg class="abs" style="left:797px;top:174px" width="10" height="10" viewBox="0 0 10 10"><path d="M1 1l8 8M9 1L1 9" stroke="#555" stroke-width="1.700"/></svg>
<div class="abs" style="left:823px;top:168px;width:202px;height:22px;border:1px solid #d9d9d9;background:#fff"></div>
<div class="abs t12 srch" style="left:832px;top:171px;color:#6d6d6d">搜尋 webdav.php (\\cloud-f...</div>
<svg class="abs" style="left:1003px;top:171px" width="16" height="16" viewBox="0 0 16 16"><circle cx="9.500" cy="6.500" r="3.600" fill="none" stroke="#555" stroke-width="1.500"/><path d="M7 9l-4.500 4.500" stroke="#555" stroke-width="1.800"/></svg>
<div class="abs" style="left:371px;top:196px;width:1px;height:342px;background:#f0f0f0"></div>
<div class="abs" style="left:213px;top:469px;width:156px;height:24px;background:#d9d9d9"></div>
<svg class="abs" style="left:238px;top:216px" width="16" height="16" viewBox="0 0 16 16"><path d="M9.5 2l1.6 3.6 3.9.4-2.9 2.7.8 3.9-3.4-2-3.4 2 .8-3.9-2.9-2.7 3.9-.4z" fill="#2f8be6"/><path d="M1 9.5l3.5-2M.5 12.5l4-2.2M2.5 14.5l3-1.8" stroke="#5aa7f0" stroke-width="1.1"/></svg>
<div class="abs t12" style="left:259px;top:216.5px;">快速存取</div>
<svg class="abs" style="left:245px;top:240px" width="16" height="16" viewBox="0 0 16 16"><rect x="0" y="3" width="16" height="10.5" rx=".8" fill="#1e8be9"/><rect x="0" y="3" width="16" height="5" rx=".8" fill="#3aa0f5"/><path d="M1.5 12h13" stroke="#cfe8ff" stroke-width=".9" stroke-dasharray="1.2 .8"/></svg>
<div class="abs t12 ls" style="left:266px;top:240.5px;">桌面</div>
<svg class="abs" style="left:354px;top:242.5px" width="12" height="12" viewBox="0 0 16 16"><path d="M9.500 2l4.500 4.500-1 .8-1-.3-2.500 2.500.2 2.200-1 1-2.700-2.700L2.500 13.500 2 13l3.500-3.500L2.800 6.800l1-1 2.200.2 2.500-2.500-.3-1z" fill="#8a8f94"/></svg>
<svg class="abs" style="left:245px;top:264px" width="16" height="16" viewBox="0 0 16 16"><path d="M5 .5h6v6.500h4.500L8 15.500.5 7h4.500z" fill="#2f8be6"/></svg>
<div class="abs t12 ls" style="left:266px;top:264.5px;">下載</div>
<svg class="abs" style="left:354px;top:266.5px" width="12" height="12" viewBox="0 0 16 16"><path d="M9.500 2l4.500 4.500-1 .8-1-.3-2.500 2.500.2 2.200-1 1-2.700-2.700L2.500 13.500 2 13l3.500-3.500L2.800 6.800l1-1 2.200.2 2.500-2.500-.3-1z" fill="#8a8f94"/></svg>
<svg class="abs" style="left:245px;top:288px" width="16" height="16" viewBox="0 0 16 16"><path d="M2.500 .5h8l3 3v12h-11z" fill="#fff" stroke="#8a8a8a"/><path d="M10.5 .5v3h3" fill="none" stroke="#8a8a8a"/><path d="M5 4.500h4M5 6.500h6M5 8.500h6" stroke="#2f7fd6" stroke-width="1"/><rect x="5" y="10" width="3" height="2.500" fill="#5b8f5e"/><path d="M9 10.500h2.500M9 12h2.500" stroke="#8a8a8a" stroke-width=".8"/></svg>
<div class="abs t12 ls" style="left:266px;top:288.5px;">文件</div>
<svg class="abs" style="left:354px;top:290.5px" width="12" height="12" viewBox="0 0 16 16"><path d="M9.500 2l4.500 4.500-1 .8-1-.3-2.500 2.500.2 2.200-1 1-2.700-2.700L2.500 13.500 2 13l3.500-3.500L2.800 6.800l1-1 2.200.2 2.500-2.500-.3-1z" fill="#8a8f94"/></svg>
<svg class="abs" style="left:245px;top:312px" width="16" height="16" viewBox="0 0 16 16"><rect x=".5" y="2.500" width="15" height="11" fill="#fff" stroke="#9a9a9a"/><rect x="2" y="4" width="12" height="8" fill="#a9d3f2"/><path d="M2 12l3.500-4 3 2.500 2.500-1.500 3 3z" fill="#3d6b4a"/><path d="M2 10.500c3-1 8-.5 12 .5v1H2z" fill="#27503a"/></svg>
<div class="abs t12 ls" style="left:266px;top:312.5px;">圖片</div>
<svg class="abs" style="left:354px;top:314.5px" width="12" height="12" viewBox="0 0 16 16"><path d="M9.500 2l4.500 4.500-1 .8-1-.3-2.500 2.500.2 2.200-1 1-2.700-2.700L2.500 13.500 2 13l3.500-3.500L2.800 6.800l1-1 2.200.2 2.500-2.500-.3-1z" fill="#8a8f94"/></svg>
<svg class="abs" style="left:245px;top:336px" width="16" height="16" viewBox="0 0 16 16"><path d="M2.400 .6h10.200a1 1 0 0 1 1 1v13.800h-11.200z" fill="#ffe591" stroke="#ecca62" stroke-width=".8"/><path d="M12 9.600a1 1 0 0 1 1-1h1.100a1 1 0 0 1 1 1v5.800h-3.100z" fill="#fff0b8" stroke="#e6c14e" stroke-width=".7"/></svg>
<div class="abs t12 ls" style="left:266px;top:336.5px;">config</div>
<svg class="abs" style="left:245px;top:360px" width="16" height="16" viewBox="0 0 16 16"><path d="M2.400 .6h10.200a1 1 0 0 1 1 1v13.800h-11.200z" fill="#ffe591" stroke="#ecca62" stroke-width=".8"/><path d="M12 9.600a1 1 0 0 1 1-1h1.100a1 1 0 0 1 1 1v5.800h-3.100z" fill="#fff0b8" stroke="#e6c14e" stroke-width=".7"/></svg>
<div class="abs t12 ls" style="left:266px;top:360.5px;">squid</div>
<svg class="abs" style="left:245px;top:384px" width="16" height="16" viewBox="0 0 16 16"><path d="M7 1c1 2.500 4.500 3.200 4.500 6.500 0 1.400-.7 2.500-1.500 3.200.6-2-.4-3.700-2-4.500v6.300a3 2.600 0 1 1-1-2z" fill="#1e8be9"/></svg>
<div class="abs t12 ls" style="left:266px;top:384.5px;">音樂</div>
<svg class="abs" style="left:245px;top:408px" width="16" height="16" viewBox="0 0 16 16"><path d="M2.400 .6h10.200a1 1 0 0 1 1 1v13.800h-11.200z" fill="#ffe591" stroke="#ecca62" stroke-width=".8"/><path d="M12 9.600a1 1 0 0 1 1-1h1.100a1 1 0 0 1 1 1v5.800h-3.100z" fill="#fff0b8" stroke="#e6c14e" stroke-width=".7"/></svg>
<div class="abs t12 ls" style="left:266px;top:408.5px;">螢幕擷取畫面</div>
<svg class="abs" style="left:237px;top:440px" width="16" height="16" viewBox="0 0 16 16"><path d="M4 13a3.500 3.500 0 0 1-.6-6.900 4.600 4.600 0 0 1 8.600-1A3.900 3.900 0 0 1 12.500 13z" fill="#1572d3"/><path d="M4 13a3.500 3.500 0 0 1 .8-6.900c2 .2 5 2.900 9.700 5.400-.5 1-1.400 1.500-2.300 1.500z" fill="#2c9bf0"/></svg>
<div class="abs t12 ls" style="left:258px;top:440.5px;">OneDrive</div>
<svg class="abs" style="left:237px;top:472px" width="16" height="16" viewBox="0 0 16 16"><rect x="1" y="2" width="14" height="9" fill="#41b6f5" stroke="#2a8fd2" stroke-width=".8"/><path d="M1.400 2.400h13.200L1.400 9z" fill="#7fd2fb" opacity=".7"/><rect x="5" y="12" width="6" height=".9" fill="#7f9cb8"/><rect x="1" y="14" width="14" height="1.200" fill="#9db4cc"/></svg>
<div class="abs t12" style="left:258px;top:472.5px;">本機</div>
<svg class="abs" style="left:237px;top:504px" width="16" height="16" viewBox="0 0 16 16"><circle cx="10" cy="5.500" r="4.800" fill="#4a9be0"/><path d="M7 3c2-1 4 0 4.500 2-1 1.500-3 1-3.500 3-1-.5-2-3-1-5z" fill="#bfe0b0" opacity=".8"/><rect x=".8" y="7" width="9" height="6" fill="#41b6f5" stroke="#2a7fc2" stroke-width=".8"/><rect x="4" y="13.400" width="2.600" height="1" fill="#7f9cb8"/><rect x="2.500" y="14.600" width="5.600" height=".8" fill="#9db4cc"/></svg>
<div class="abs t12" style="left:258px;top:504.5px;">網路</div>
<div class="abs" style="left:1020px;top:196px;width:17px;height:342px;background:#f0f0f0"></div>
<div class="abs" style="left:1020px;top:367px;width:17px;height:154px;background:#cdcdcd"></div>
<svg class="abs" style="left:1023px;top:202px" width="10" height="7" viewBox="0 0 10 7"><path d="M1 6l4-4 4 4" fill="none" stroke="#505050" stroke-width="1.800"/></svg>
<svg class="abs" style="left:1023px;top:527px" width="10" height="7" viewBox="0 0 10 7"><path d="M1 1l4 4 4-4" fill="none" stroke="#505050" stroke-width="1.800"/></svg>
<div class="abs t12" style="left:227px;top:542.5px;color:#333">45 個項目</div>
<div class="abs" style="left:290px;top:543px;width:1px;height:14px;background:#f0f0f0"></div>
<svg class="abs" style="left:992px;top:543px" width="16" height="13" viewBox="0 0 16 13"><rect x=".5" y=".5" width="4" height="12" fill="#fff" stroke="#9a9a9a" stroke-width=".8"/><rect x="2" y="2" width="1" height="1" fill="#666"/><rect x="2" y="6" width="1" height="1" fill="#2f7fd6"/><rect x="2" y="10" width="1" height="1" fill="#d22"/><path d="M6.500 2.500h4M12 2.500h4M6.500 6.500h4M12 6.500h4M6.500 10.500h4M12 10.500h4" stroke="#666" stroke-width="1"/></svg><svg class="abs" style="left:1014px;top:543px" width="15" height="12" viewBox="0 0 15 12"><rect x=".5" y=".5" width="14" height="11" fill="#fff" stroke="#8a8a8a"/><rect x="2" y="2" width="11" height="8" fill="#4a90d9"/><path d="M2 10l3-3.500 3 2 2-1 3 2.500z" fill="#2c5a3c"/><path d="M2 4h11" stroke="#9cc8f0" stroke-width="1.500"/></svg>
<div class="abs" style="left:466px;top:426px;width:74px;height:68px;border:1px solid #99d1ff;background:#fff"></div>
<div class="fi" style="left:386px;top:200px"><svg viewBox="0 0 48 48"><path d="M8.500 3.500h22.700l8.300 8.300v32.700h-31z" fill="#fff" stroke="#a6a6a6" stroke-width="1"/><path d="M31.200 3.500v8.300h8.300z" fill="#f2f2f2" stroke="#a6a6a6" stroke-width="1" stroke-linejoin="round"/><path d="M12 7.5H28M12 10.5H28M12 13.5H36" stroke="#b0b0b0" stroke-width="1"/><path d="M12 40.5H36" stroke="#b0b0b0" stroke-width="1"/><rect x="6" y="19" width="36.300" height="19" fill="#d9001b"/><rect x="6" y="19" width="36.300" height="19" fill="none" stroke="#b00014" stroke-width=".6"/><text x="24.200" y="33.600" font-family="Liberation Sans,sans-serif" font-weight="bold" font-size="13.500" fill="#fff" text-anchor="middle">PDF</text></svg><div class="lb">JSST<br>Preparatio<br>ns</div></div>
<div class="fi" style="left:465px;top:200px"><svg viewBox="0 0 48 48"><path d="M8.500 3.500h22.700l8.300 8.300v32.700h-31z" fill="#fff" stroke="#a6a6a6" stroke-width="1"/><path d="M31.200 3.500v8.300h8.300z" fill="#f2f2f2" stroke="#a6a6a6" stroke-width="1" stroke-linejoin="round"/><path d="M12 7.5H28M12 10.5H28M12 13.5H36" stroke="#b0b0b0" stroke-width="1"/><path d="M12 40.5H36" stroke="#b0b0b0" stroke-width="1"/><rect x="6" y="19" width="36.300" height="19" fill="#d9001b"/><rect x="6" y="19" width="36.300" height="19" fill="none" stroke="#b00014" stroke-width=".6"/><text x="24.200" y="33.600" font-family="Liberation Sans,sans-serif" font-weight="bold" font-size="13.500" fill="#fff" text-anchor="middle">PDF</text></svg><div class="lb">JSST<br>Preparatio<br>ns1</div></div>
<div class="fi" style="left:544px;top:200px"><svg viewBox="0 0 48 48"><path d="M8.200 3h29.600a1 1 0 0 1 1 1v41h-30.600z" fill="#fce391" stroke="#eccb62" stroke-width=".8"/><path d="M9.700 4.500v39.500" stroke="#fff6d0" stroke-width=".9"/><path d="M34.600 45V31.500l3.500-5 3.500 5V45z" fill="#ffe9a6" stroke="#e8c352" stroke-width=".8"/><rect x="27.300" y="18" width="4.200" height="27" fill="#e6e6e6" stroke="#b5b5b5" stroke-width=".4"/><path d="M27.600 19l3.600 1.3" stroke="#5e5e5e" stroke-width=".9"/><path d="M27.600 22l3.600 -1.3" stroke="#5e5e5e" stroke-width=".9"/><path d="M27.600 22.4l3.600 1.3" stroke="#5e5e5e" stroke-width=".9"/><path d="M27.600 25.4l3.600 -1.3" stroke="#5e5e5e" stroke-width=".9"/><path d="M27.600 25.8l3.600 1.3" stroke="#5e5e5e" stroke-width=".9"/><path d="M27.600 28.8l3.600 -1.3" stroke="#5e5e5e" stroke-width=".9"/><path d="M27.600 29.2l3.600 1.3" stroke="#5e5e5e" stroke-width=".9"/><path d="M27.600 32.2l3.600 -1.3" stroke="#5e5e5e" stroke-width=".9"/><path d="M27.600 32.6l3.600 1.3" stroke="#5e5e5e" stroke-width=".9"/><path d="M27.600 35.6l3.600 -1.3" stroke="#5e5e5e" stroke-width=".9"/><path d="M27.600 36l3.600 1.3" stroke="#5e5e5e" stroke-width=".9"/><path d="M27.600 39l3.600 -1.3" stroke="#5e5e5e" stroke-width=".9"/><path d="M27.600 39.4l3.600 1.3" stroke="#5e5e5e" stroke-width=".9"/><path d="M27.600 42.4l3.600 -1.3" stroke="#5e5e5e" stroke-width=".9"/><path d="M27.600 42.8l3.600 1.3" stroke="#5e5e5e" stroke-width=".9"/><rect x="25.800" y="2.700" width="7.200" height="16" rx="1.600" fill="#c9c9c9" stroke="#8e8e8e" stroke-width=".7"/><rect x="27" y="3.500" width="2.200" height="14.500" fill="#e4e4e4" opacity=".8"/><rect x="28.300" y="6.200" width="2.200" height="1.800" fill="#555"/><rect x="27.900" y="12.500" width="3" height="3" fill="#333"/><rect x="28" y="42.500" width="2.800" height="2.500" fill="#b8b8b8" stroke="#8a8a8a" stroke-width=".4"/></svg><div class="lb">LastPassw<br>ordChang<br>eTimesta<br>mp記入...</div></div>
<div class="fi" style="left:623px;top:200px"><svg viewBox="0 0 48 48"><path d="M8.200 3h29.600a1 1 0 0 1 1 1v41h-30.600z" fill="#fce391" stroke="#eccb62" stroke-width=".8"/><path d="M9.700 4.500v39.500" stroke="#fff6d0" stroke-width=".9"/><path d="M34.600 45V31.500l3.500-5 3.500 5V45z" fill="#ffe9a6" stroke="#e8c352" stroke-width=".8"/><rect x="27.300" y="18" width="4.200" height="27" fill="#e6e6e6" stroke="#b5b5b5" stroke-width=".4"/><path d="M27.600 19l3.600 1.3" stroke="#5e5e5e" stroke-width=".9"/><path d="M27.600 22l3.600 -1.3" stroke="#5e5e5e" stroke-width=".9"/><path d="M27.600 22.4l3.600 1.3" stroke="#5e5e5e" stroke-width=".9"/><path d="M27.600 25.4l3.600 -1.3" stroke="#5e5e5e" stroke-width=".9"/><path d="M27.600 25.8l3.600 1.3" stroke="#5e5e5e" stroke-width=".9"/><path d="M27.600 28.8l3.600 -1.3" stroke="#5e5e5e" stroke-width=".9"/><path d="M27.600 29.2l3.600 1.3" stroke="#5e5e5e" stroke-width=".9"/><path d="M27.600 32.2l3.600 -1.3" stroke="#5e5e5e" stroke-width=".9"/><path d="M27.600 32.6l3.600 1.3" stroke="#5e5e5e" stroke-width=".9"/><path d="M27.600 35.6l3.600 -1.3" stroke="#5e5e5e" stroke-width=".9"/><path d="M27.600 36l3.600 1.3" stroke="#5e5e5e" stroke-width=".9"/><path d="M27.600 39l3.600 -1.3" stroke="#5e5e5e" stroke-width=".9"/><path d="M27.600 39.4l3.600 1.3" stroke="#5e5e5e" stroke-width=".9"/><path d="M27.600 42.4l3.600 -1.3" stroke="#5e5e5e" stroke-width=".9"/><path d="M27.600 42.8l3.600 1.3" stroke="#5e5e5e" stroke-width=".9"/><rect x="25.800" y="2.700" width="7.200" height="16" rx="1.600" fill="#c9c9c9" stroke="#8e8e8e" stroke-width=".7"/><rect x="27" y="3.500" width="2.200" height="14.500" fill="#e4e4e4" opacity=".8"/><rect x="28.300" y="6.200" width="2.200" height="1.800" fill="#555"/><rect x="27.900" y="12.500" width="3" height="3" fill="#333"/><rect x="28" y="42.500" width="2.800" height="2.500" fill="#b8b8b8" stroke="#8a8a8a" stroke-width=".4"/></svg><div class="lb">LogMeInH<br>amachiInst<br>aller</div></div>
<div class="fi" style="left:702px;top:200px"><svg viewBox="0 0 48 48"><rect x="3.500" y="8.500" width="41" height="30" fill="#fdfdfd" stroke="#8c8c8c"/><rect x="4" y="9" width="40" height="2" fill="#8a8a8a"/><path d="M36.500 10h1.500M39.300 10h1.500M42 10h1.500" stroke="#d6d6d6" stroke-width="1"/><rect x="4" y="11" width="8.500" height="27" fill="#ececec"/><rect x="13.500" y="14" width="17" height="21" fill="#0f75d8"/><path d="M5.800 15.500h.8M5.800 18.500h.8M5.800 21.500h.8M5.800 24.500h.8M5.800 27.500h.8" stroke="#777" stroke-width="1"/><path d="M7.800 15.500h3.600M7.800 18.500h3.600M7.800 21.500h3.600M7.800 24.500h3.600M7.800 27.500h3.600" stroke="#9a9a9a" stroke-width="1"/><path d="M32.500 15.500h10M32.500 17.500h10M32.500 19.500h10M32.500 21.500h10M32.500 23.500h10M32.500 25.500h10M32.500 27.500h10M32.500 29.500h6" stroke="#8f8f8f" stroke-width=".8"/></svg><div class="lb">main</div></div>
<div class="fi" style="left:781px;top:200px"><svg viewBox="0 0 48 48"><path d="M8.200 3h29.600a1 1 0 0 1 1 1v41h-30.600z" fill="#fce391" stroke="#eccb62" stroke-width=".8"/><path d="M9.700 4.500v39.500" stroke="#fff6d0" stroke-width=".9"/><path d="M34.600 45V31.500l3.500-5 3.500 5V45z" fill="#ffe9a6" stroke="#e8c352" stroke-width=".8"/><rect x="27.300" y="18" width="4.200" height="27" fill="#e6e6e6" stroke="#b5b5b5" stroke-width=".4"/><path d="M27.600 19l3.600 1.3" stroke="#5e5e5e" stroke-width=".9"/><path d="M27.600 22l3.600 -1.3" stroke="#5e5e5e" stroke-width=".9"/><path d="M27.600 22.4l3.600 1.3" stroke="#5e5e5e" stroke-width=".9"/><path d="M27.600 25.4l3.600 -1.3" stroke="#5e5e5e" stroke-width=".9"/><path d="M27.600 25.8l3.600 1.3" stroke="#5e5e5e" stroke-width=".9"/><path d="M27.600 28.8l3.600 -1.3" stroke="#5e5e5e" stroke-width=".9"/><path d="M27.600 29.2l3.600 1.3" stroke="#5e5e5e" stroke-width=".9"/><path d="M27.600 32.2l3.600 -1.3" stroke="#5e5e5e" stroke-width=".9"/><path d="M27.600 32.6l3.600 1.3" stroke="#5e5e5e" stroke-width=".9"/><path d="M27.600 35.6l3.600 -1.3" stroke="#5e5e5e" stroke-width=".9"/><path d="M27.600 36l3.600 1.3" stroke="#5e5e5e" stroke-width=".9"/><path d="M27.600 39l3.600 -1.3" stroke="#5e5e5e" stroke-width=".9"/><path d="M27.600 39.4l3.600 1.3" stroke="#5e5e5e" stroke-width=".9"/><path d="M27.600 42.4l3.600 -1.3" stroke="#5e5e5e" stroke-width=".9"/><path d="M27.600 42.8l3.600 1.3" stroke="#5e5e5e" stroke-width=".9"/><rect x="25.800" y="2.700" width="7.200" height="16" rx="1.600" fill="#c9c9c9" stroke="#8e8e8e" stroke-width=".7"/><rect x="27" y="3.500" width="2.200" height="14.500" fill="#e4e4e4" opacity=".8"/><rect x="28.300" y="6.200" width="2.200" height="1.800" fill="#555"/><rect x="27.900" y="12.500" width="3" height="3" fill="#333"/><rect x="28" y="42.500" width="2.800" height="2.500" fill="#b8b8b8" stroke="#8a8a8a" stroke-width=".4"/></svg><div class="lb">pair</div></div>
<div class="fi" style="left:860px;top:200px"><svg viewBox="0 0 48 48"><rect x="0" y="0" width="46" height="45.700" fill="#b6b6b6"/><rect x="0" y="28" width="46" height="17.700" fill="url(#pp)"/><rect x="40.400" y="0" width="5.600" height="45.700" fill="#adadad"/><rect x="1.400" y=".5" width="18.600" height="27.500" fill="#c2c6cb"/><rect x="20" y=".5" width="20.400" height="27.500" fill="#dcdfe6"/><rect x="19.600" y=".5" width="1" height="27.500" fill="#b3a9ad"/><rect x="6" y="1.600" width="9" height="3.200" rx="1" fill="#2f2b2b"/><rect x="7.300" y="4.200" width="6.400" height="3" fill="#b7a59b"/><rect x="6" y="22.300" width="3.400" height="4.200" fill="#5f5856"/><rect x="10.500" y="23" width="3.400" height="3.600" fill="#8d8986"/><rect x="15" y="23" width="3" height="3.600" fill="#a8aaa6"/><path d="M6 10h11M6 12.500h11M6 15h9M6 17.500h11M6 20h8" stroke="#a5b4c8" stroke-width=".9"/><path d="M22.500 4h15M22.500 7h15M22.500 10h13M22.500 13h15M22.500 16h11M22.500 19h15M22.500 22h12" stroke="#c2cbdc" stroke-width=".9"/><path d="M0 45.700h46" stroke="#9c9c9c" stroke-width=".8"/><path d="M46 1v44.700" stroke="#a2a2a2" stroke-width=".6"/></svg><div class="lb">passport_n<br>ew</div></div>
<div class="fi" style="left:939px;top:200px"><svg viewBox="0 0 48 48"><path d="M7.500 2.500h25l8.500 8.500v34.200h-33.500z" fill="#fbfbfb" stroke="#858585"/><path d="M32.500 2.500v8.500h8.500z" fill="#f0f0f0" stroke="#858585" stroke-linejoin="round"/><circle cx="32.200" cy="23.300" r="6.200" fill="#f2714f"/><path d="M32.900 22.600v-6.600a6.600 6.600 0 0 1 6.600 6.600z" fill="#fbc1b0"/><rect x="2" y="13" width="22.200" height="21.800" rx="1.500" fill="#c43e1c"/><text x="13" y="30" font-family="Liberation Sans,sans-serif" font-weight="bold" font-size="17" fill="#fff" text-anchor="middle">P</text></svg><div class="lb">PPT-Samp<br>le-with-Vi<br>deo</div></div>
<div class="fi" style="left:386px;top:314px"><svg viewBox="0 0 48 48"><path d="M8.500 3.500h22.700l8.300 8.300v32.700h-31z" fill="url(#bk)" stroke="#a6a6a6" stroke-width="1"/><path d="M31.200 3.500v8.300h8.300z" fill="#f2f2f2" stroke="#a6a6a6" stroke-width="1" stroke-linejoin="round"/></svg><div class="lb">prj_config_<br>ini.rar</div></div>
<div class="fi" style="left:465px;top:314px"><svg viewBox="0 0 48 48"><path d="M8.500 3.500h22.700l8.300 8.300v32.700h-31z" fill="url(#bk)" stroke="#a6a6a6" stroke-width="1"/><path d="M31.200 3.500v8.300h8.300z" fill="#f2f2f2" stroke="#a6a6a6" stroke-width="1" stroke-linejoin="round"/></svg><div class="lb">rule_group<br>_20200713<br>_125346.y<br>ml</div></div>
<div class="fi" style="left:544px;top:314px"><svg viewBox="0 0 48 48"><path d="M8.500 3.500h22.700l8.300 8.300v32.700h-31z" fill="url(#bk)" stroke="#a6a6a6" stroke-width="1"/><path d="M31.200 3.500v8.300h8.300z" fill="#f2f2f2" stroke="#a6a6a6" stroke-width="1" stroke-linejoin="round"/><rect x="13" y="14.500" width="22" height="22" fill="#1583e0"/><path d="M13 36.500V30l8-9 9 10.500 5-5v10z" fill="#0f4a8f"/><path d="M25 36.500l6-7.500 4 4v3.500z" fill="#4f6ad0"/><path d="M13 36.500v-3l8-12.500 5 7-6 8.500z" fill="#123f85" opacity=".6"/><circle cx="28.700" cy="19.500" r="2" fill="#fff"/></svg><div class="lb">S__491356<br>41</div></div>
<div class="fi" style="left:623px;top:314px"><svg viewBox="0 0 48 48"><path d="M8.500 3.500h22.700l8.300 8.300v32.700h-31z" fill="#fff" stroke="#a6a6a6" stroke-width="1"/><path d="M31.200 3.500v8.300h8.300z" fill="#f2f2f2" stroke="#a6a6a6" stroke-width="1" stroke-linejoin="round"/><path d="M12 7.5H28M12 10.5H28M12 13.5H36" stroke="#b0b0b0" stroke-width="1"/><path d="M12 40.5H36" stroke="#b0b0b0" stroke-width="1"/><rect x="6" y="19" width="36.300" height="19" fill="#d9001b"/><rect x="6" y="19" width="36.300" height="19" fill="none" stroke="#b00014" stroke-width=".6"/><text x="24.200" y="33.600" font-family="Liberation Sans,sans-serif" font-weight="bold" font-size="13.500" fill="#fff" text-anchor="middle">PDF</text></svg><div class="lb">SCN_0003</div></div>
<div class="fi" style="left:702px;top:314px"><svg viewBox="0 0 48 48"><g transform="translate(0,10)"><rect x="-.5" y="9.500" width="46" height="25.500" fill="#2b2d33"/><rect x="-.5" y="9.500" width="46" height="1.200" fill="#3c3f46"/><rect x="0" y="10.700" width="9.500" height="23" fill="#e9ebef"/><rect x="9.500" y="10.700" width="10.500" height="23" fill="#53565e"/><rect x="20" y="10.700" width="15" height="23" fill="#15161a"/><rect x="35" y="10.700" width="4" height="23" fill="#2e3138"/><rect x="39" y="10.700" width="6.500" height="23" fill="#e4e9f2"/><rect x="40" y="11.300" width="5" height="2" fill="#3b78d8"/><path d="M11 15h6M11 18h6M11 21h5M11 24h6M22 14h7M22 17h4M26 20h3M22 23h8M22 27h5" stroke="#9a9fa8" stroke-width=".6"/><path d="M1.500 14h6M1.500 17h6M1.500 20h5M1.500 23h6" stroke="#c5c9d0" stroke-width=".6"/><rect x="-.5" y="33.700" width="46" height="1.300" fill="#dfe3e8"/><rect x="13" y="34" width="12" height=".8" fill="#4f7f90"/></g></svg><div class="lb">Screensho<br>t (1)</div></div>
<div class="fi" style="left:781px;top:314px"><svg viewBox="0 0 48 48"><path d="M8.500 3.500h22.700l8.300 8.300v32.700h-31z" fill="url(#bk)" stroke="#a6a6a6" stroke-width="1"/><path d="M31.200 3.500v8.300h8.300z" fill="#f2f2f2" stroke="#a6a6a6" stroke-width="1" stroke-linejoin="round"/></svg><div class="lb">squid.conf</div></div>
<div class="fi" style="left:860px;top:314px"><svg viewBox="0 0 48 48"><path d="M8.500 3.500h22.700l8.300 8.300v32.700h-31z" fill="#fff" stroke="#a6a6a6" stroke-width="1"/><path d="M31.200 3.500v8.300h8.300z" fill="#f2f2f2" stroke="#a6a6a6" stroke-width="1" stroke-linejoin="round"/><path d="M12 7.5H28M12 10.5H28M12 13.5H36M12 16.5H36M12 19.5H36M12 22.5H36M12 25.5H36M12 28.5H36M12 31.5H36M12 34.5H36M12 37.5H36M12 40.5H36" stroke="#9c9c9c" stroke-width="0.9"/></svg><div class="lb">test_note</div></div>
<div class="fi" style="left:939px;top:314px"><svg viewBox="0 0 48 48"><path d="M8.500 3.500h22.700l8.300 8.300v32.700h-31z" fill="#fff" stroke="#a6a6a6" stroke-width="1"/><path d="M31.200 3.500v8.300h8.300z" fill="#f2f2f2" stroke="#a6a6a6" stroke-width="1" stroke-linejoin="round"/><path d="M12 7.5H28M12 10.5H28M12 13.5H36M12 16.5H36M12 19.5H36M12 22.5H36M12 25.5H36M12 28.5H36M12 31.5H36M12 34.5H36M12 37.5H36M12 40.5H36" stroke="#9c9c9c" stroke-width="0.9"/></svg><div class="lb">test1240<br>copy</div></div>
<div class="fi" style="left:386px;top:428px"><svg viewBox="0 0 48 48"><path d="M8.500 3.500h22.700l8.300 8.300v32.700h-31z" fill="url(#bk)" stroke="#a6a6a6" stroke-width="1"/><path d="M31.200 3.500v8.300h8.300z" fill="#f2f2f2" stroke="#a6a6a6" stroke-width="1" stroke-linejoin="round"/><rect x="13" y="14.500" width="22" height="22" fill="#1583e0"/><path d="M13 36.500V30l8-9 9 10.500 5-5v10z" fill="#0f4a8f"/><path d="M25 36.500l6-7.500 4 4v3.500z" fill="#4f6ad0"/><path d="M13 36.500v-3l8-12.500 5 7-6 8.500z" fill="#123f85" opacity=".6"/><circle cx="28.700" cy="19.500" r="2" fill="#fff"/></svg><div class="lb">video_bg</div></div>
<div class="fi" style="left:465px;top:428px"><svg viewBox="0 0 48 48"><path d="M8.200 3h29.600a1 1 0 0 1 1 1v41h-30.600z" fill="#fce391" stroke="#eccb62" stroke-width=".8"/><path d="M9.700 4.500v39.500" stroke="#fff6d0" stroke-width=".9"/><path d="M34.600 45V31.500l3.500-5 3.500 5V45z" fill="#ffe9a6" stroke="#e8c352" stroke-width=".8"/><rect x="27.300" y="18" width="4.200" height="27" fill="#e6e6e6" stroke="#b5b5b5" stroke-width=".4"/><path d="M27.600 19l3.600 1.3" stroke="#5e5e5e" stroke-width=".9"/><path d="M27.600 22l3.600 -1.3" stroke="#5e5e5e" stroke-width=".9"/><path d="M27.600 22.4l3.600 1.3" stroke="#5e5e5e" stroke-width=".9"/><path d="M27.600 25.4l3.600 -1.3" stroke="#5e5e5e" stroke-width=".9"/><path d="M27.600 25.8l3.600 1.3" stroke="#5e5e5e" stroke-width=".9"/><path d="M27.600 28.8l3.600 -1.3" stroke="#5e5e5e" stroke-width=".9"/><path d="M27.600 29.2l3.600 1.3" stroke="#5e5e5e" stroke-width=".9"/><path d="M27.600 32.2l3.600 -1.3" stroke="#5e5e5e" stroke-width=".9"/><path d="M27.600 32.6l3.600 1.3" stroke="#5e5e5e" stroke-width=".9"/><path d="M27.600 35.6l3.600 -1.3" stroke="#5e5e5e" stroke-width=".9"/><path d="M27.600 36l3.600 1.3" stroke="#5e5e5e" stroke-width=".9"/><path d="M27.600 39l3.600 -1.3" stroke="#5e5e5e" stroke-width=".9"/><path d="M27.600 39.4l3.600 1.3" stroke="#5e5e5e" stroke-width=".9"/><path d="M27.600 42.4l3.600 -1.3" stroke="#5e5e5e" stroke-width=".9"/><path d="M27.600 42.8l3.600 1.3" stroke="#5e5e5e" stroke-width=".9"/><rect x="25.800" y="2.700" width="7.200" height="16" rx="1.600" fill="#c9c9c9" stroke="#8e8e8e" stroke-width=".7"/><rect x="27" y="3.500" width="2.200" height="14.500" fill="#e4e4e4" opacity=".8"/><rect x="28.300" y="6.200" width="2.200" height="1.800" fill="#555"/><rect x="27.900" y="12.500" width="3" height="3" fill="#333"/><rect x="28" y="42.500" width="2.800" height="2.500" fill="#b8b8b8" stroke="#8a8a8a" stroke-width=".4"/></svg><div class="lb">project2</div></div>
<div class="fi" style="left:544px;top:428px"><svg viewBox="0 0 48 48"><path d="M7.500 2.500h25l8.500 8.500v34.200h-33.500z" fill="#fbfbfb" stroke="#858585"/><path d="M32.500 2.500v8.500h8.500z" fill="#f0f0f0" stroke="#858585" stroke-linejoin="round"/><path d="M26.500 20.400h4.600M32.500 20.400h4.600" stroke="#21a366" stroke-width="2"/><path d="M26.500 24.200h4.600M32.500 24.200h4.600" stroke="#107c41" stroke-width="2"/><path d="M26.500 28h4.600M32.500 28h4.600" stroke="#185c37" stroke-width="2"/><rect x="2" y="13" width="22.200" height="21.800" rx="1.500" fill="#107c41"/><text x="13" y="30" font-family="Liberation Sans,sans-serif" font-weight="bold" font-size="17" fill="#fff" text-anchor="middle">X</text></svg><div class="lb">使用者帳號</div></div>
<div class="fi" style="left:623px;top:428px"><svg viewBox="0 0 48 48"><path d="M8.500 3.500h22.700l8.300 8.300v32.700h-31z" fill="url(#bk)" stroke="#a6a6a6" stroke-width="1"/><path d="M31.200 3.500v8.300h8.300z" fill="#f2f2f2" stroke="#a6a6a6" stroke-width="1" stroke-linejoin="round"/><rect x="13" y="14.500" width="22" height="22" fill="#1583e0"/><path d="M13 36.500V30l8-9 9 10.500 5-5v10z" fill="#0f4a8f"/><path d="M25 36.500l6-7.500 4 4v3.500z" fill="#4f6ad0"/><path d="M13 36.500v-3l8-12.500 5 7-6 8.500z" fill="#123f85" opacity=".6"/><circle cx="28.700" cy="19.500" r="2" fill="#fff"/></svg><div class="lb">截圖<br>2020-04-2<br>5 下午<br>6.37.40_...</div></div>
<div class="fi" style="left:702px;top:428px"><svg viewBox="0 0 48 48"><path d="M7.500 2.500h25l8.500 8.500v34.200h-33.500z" fill="#fbfbfb" stroke="#858585"/><path d="M32.500 2.500v8.500h8.500z" fill="#f0f0f0" stroke="#858585" stroke-linejoin="round"/><path d="M27 18.500h11M27 21.500h11M27 24.500h11M27 27.500h11" stroke="#2b6fd0" stroke-width="1.200"/><rect x="2" y="13" width="22.200" height="21.800" rx="1.500" fill="#185abd"/><text x="13" y="29.800" font-family="Liberation Sans,sans-serif" font-weight="bold" font-size="16" fill="#fff" text-anchor="middle">W</text></svg><div class="lb">職務経歴&nbsp;&nbsp;&nbsp;<br>馬ルヤオ</div></div>
</div></div>
<div id="tb">
<svg class="abs" style="left:15px;top:11px" width="18" height="18" viewBox="0 0 18 18"><path d="M0 2.600l7.300-1v7H0zM8.300 1.450L18 0v8.600H8.300zM0 9.500h7.300v7L0 15.500zM8.300 9.500H18V18l-9.700-1.400z" fill="#fff"/></svg>
<div class="abs" style="left:48px;top:0;width:344px;height:40px;background:#f2f2f2;border:1px solid #cfcfcf;border-bottom:none"></div>
<svg class="abs" style="left:60px;top:12px" width="18" height="18" viewBox="0 0 18 18"><circle cx="11" cy="7" r="5.300" fill="none" stroke="#333" stroke-width="1.300"/><path d="M7.200 11L1 17.200" stroke="#333" stroke-width="1.500"/></svg>
<div class="abs" style="left:88px;top:9px;font-size:15.500px;line-height:22px;color:#444;white-space:nowrap;letter-spacing:.45px">在這裡輸入文字來搜尋</div>
<svg class="abs" style="left:407px;top:11px" width="19" height="18" viewBox="0 0 19 18"><rect x="3.500" y="4" width="9" height="9.500" fill="none" stroke="#fff" stroke-width="1.300"/><path d="M1 1h13M1 16.500h13" stroke="#fff" stroke-width="1.300"/><path d="M1 .4v2.200M14 .4v2.200M1 15v2.400M14 15v2.400" stroke="#fff" stroke-width="1.300"/><path d="M16.800 1v2.500M16.800 6.500v10" stroke="#fff" stroke-width="1.600"/><circle cx="16.800" cy="7" r="1.300" fill="#fff"/></svg>
<svg class="abs" style="left:455px;top:8px" width="24" height="24" viewBox="0 0 48 48"><linearGradient id="e3" x1="0" y1=".3" x2="1" y2=".7"><stop offset="0" stop-color="#36b4f2"/><stop offset=".5" stop-color="#3cc9b4"/><stop offset="1" stop-color="#80e44a"/></linearGradient><linearGradient id="e4" x1="0" y1="0" x2="0" y2="1"><stop offset="0" stop-color="#2d92de"/><stop offset="1" stop-color="#1668c2"/></linearGradient><path d="M.5 20C1.500 8 12 0 25 0c14 0 23.200 10 23.200 20.500 0 7.500-5.200 12-11.700 12-4.500 0-8-1.500-8-4 0-2 2-3 2-7 0-5-4.500-9.500-11.500-9.500C11 12 4 15.500.5 20z" fill="url(#e3)"/><path d="M.5 20C4 15.500 11 12 19 12c5.500 0 9.500 3 10.800 7-2.800-2.500-7.300-2.500-10.800-.5-6 3.500-7 13.500-2 21 4 5.500 10 8 15 8-4 1-10 1-15-1C6.500 42.500-.5 32 .5 20z" fill="url(#e4)"/><path d="M19 18.500c-5 3.500-6 12.500-1.500 19.500 5 7.500 15.500 9.500 23 4.500 2.500-1.700 4-4 4.500-6.500-3 2.500-6.500 3.500-10.500 3.500-9 0-16-8.500-15.500-21z" fill="#124f9c"/></svg>
<div class="abs" style="left:492px;top:0;width:44px;height:40px;background:#45555e"></div>
<div class="abs" style="left:536px;top:0;width:1px;height:40px;background:#2a3a42"></div>
<div class="abs" style="left:537px;top:0;width:3px;height:40px;background:#3a4a53"></div>
<div class="abs" style="left:492px;top:38px;width:48px;height:2px;background:#76b9ed"></div>
<svg class="abs" style="left:504px;top:10px" width="24" height="20" viewBox="0 0 24 20"><path d="M1 2.500a1 1 0 0 1 1-1h7l2 2.500h11a1 1 0 0 1 1 1v13.500H1z" fill="#f6b93b"/><path d="M1 2.500a1 1 0 0 1 1-1h7l2 2.500H1z" fill="#d99a20"/><rect x="1" y="5" width="22" height="13.500" fill="#ffd766"/><path d="M6 18.500v-7h12v7h-3v-4h-6v4z" fill="#3d8fe0"/><rect x="6" y="11.500" width="12" height="2.200" fill="#5fb0f5"/></svg>
<svg class="abs" style="left:552px;top:7px" width="26" height="26" viewBox="0 0 26 26"><path d="M8.500 8V5.500a4.500 4.500 0 0 1 9 0V8" fill="none" stroke="#f2f2f2" stroke-width="1.500"/><path d="M2 8h22v16.500H2z" fill="#f4f4f4"/><rect x="8" y="12" width="4.300" height="4.300" fill="#f25022"/><rect x="13.500" y="12" width="4.300" height="4.300" fill="#7fba00"/><rect x="8" y="17.500" width="4.300" height="4.300" fill="#00a4ef"/><rect x="13.500" y="17.500" width="4.300" height="4.300" fill="#ffb900"/></svg>
<svg class="abs" style="left:601px;top:8px" width="26" height="24" viewBox="0 0 26 24"><path d="M1 9.500L13 1l12 8.500V23.500H1z" fill="#1378d4"/><path d="M1 9.500h24L13 19z" fill="#fff"/><path d="M1 23.500l12-9.500 12 9.500z" fill="#2f9bf0"/><path d="M1 9.500l12 9.500L1 23.500z" fill="#1b86e2"/><path d="M25 9.500L13 19l12 4.500z" fill="#0f6fc8"/><path d="M1 9.500h24L13 17.500z" fill="#f2f6fa"/></svg>
<svg class="abs" style="left:651px;top:8px" width="24" height="24" viewBox="0 0 24 24"><rect width="24" height="24" fill="#c42b1c"/><circle cx="12" cy="12" r="8" fill="none" stroke="#f5e9e4" stroke-width="1.300"/><path d="M12 4v16M5.500 8.500h13M5.500 15.500h13M8.500 8.500v7M15.500 8.500v7M8.500 12h7" stroke="#f5e9e4" stroke-width="1.100" fill="none"/></svg>
<div class="abs" style="left:643px;top:38px;width:40px;height:2px;background:#76b9ed"></div>
<svg class="abs" style="left:1044px;top:16px" width="12" height="8" viewBox="0 0 12 8"><path d="M1 7l5-5.500L11 7" fill="none" stroke="#fff" stroke-width="1.300"/></svg>
<svg class="abs" style="left:1066px;top:15px" width="17" height="10" viewBox="0 0 17 10"><rect x=".7" y=".7" width="13.600" height="8.600" rx="1" fill="none" stroke="#fff" stroke-width="1.300"/><rect x="2.400" y="2.400" width="8.500" height="5.200" fill="#fff"/><rect x="15" y="3" width="1.600" height="4" fill="#fff"/></svg>
<svg class="abs" style="left:1116px;top:13px" width="15" height="15" viewBox="0 0 15 15"><circle cx="12.500" cy="12.500" r="1.700" fill="#fff"/><path d="M8.500 13.500a4.500 4.500 0 0 1 4.500-4.500M5.200 13.500a7.800 7.800 0 0 1 7.800-7.800M1.800 13.500A11.200 11.200 0 0 1 13 2.300" fill="none" stroke="#cfd6dc" stroke-width="1.400"/></svg>
<div class="abs" style="left:1186px;top:9px;font-size:14px;line-height:22px;color:#dcdcdc">英</div>
<div class="abs" style="left:1214px;top:12px;width:16px;height:15px;background:#fff"></div>
<div class="abs" style="left:1214px;top:10px;width:16px;font-size:11px;line-height:18px;color:#111;text-align:center;font-weight:bold">ㄅ</div>
<div class="abs" style="left:1236px;top:3px;width:80px;text-align:center;font-size:12px;line-height:17px;color:#fff;white-space:nowrap;letter-spacing:.3px">上午 04:16<br>2020/9/1</div>
<svg class="abs" style="left:1324px;top:10px" width="22" height="24" viewBox="0 0 22 24"><path d="M1.500 1.500h15v11.500h-7l-4.500 4v-4h-3.500z" fill="#fff"/><path d="M4 4.500h10M4 7h10M4 9.500h10" stroke="#1a2a44" stroke-width="1"/><circle cx="15.500" cy="17.300" r="6.800" fill="#33363c" stroke="#9a9ea6" stroke-width="1"/><text x="15.500" y="21.300" font-family="Liberation Sans,sans-serif" font-size="11" fill="#fff" text-anchor="middle">1</text></svg>
<div class="abs" style="left:1361px;top:0;width:1px;height:40px;background:#5a6478"></div>
</div>
</body></html>
